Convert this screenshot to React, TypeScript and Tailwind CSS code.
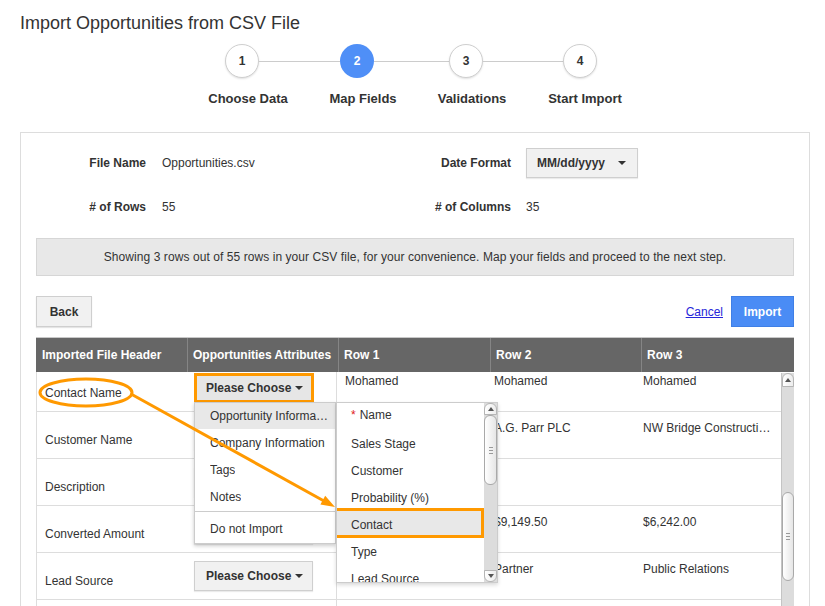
import React from "react";

const STEPS = [
  { n: "1", label: "Choose Data" },
  { n: "2", label: "Map Fields" },
  { n: "3", label: "Validations" },
  { n: "4", label: "Start Import" },
];

const ROWS = [
  { head: "Contact Name", vals: ["Mohamed", "Mohamed", "Mohamed"] },
  { head: "Customer Name", vals: ["", "A.G. Parr PLC", "NW Bridge Construction Ltd"] },
  { head: "Description", vals: ["", "", ""] },
  { head: "Converted Amount", vals: ["", "$9,149.50", "$6,242.00"] },
  { head: "Lead Source", vals: ["", "Partner", "Public Relations"] },
];

const MENU = ["Opportunity Information", "Company Information", "Tags", "Notes"];
const FIELDS = ["Name", "Sales Stage", "Customer", "Probability (%)", "Contact", "Type", "Lead Source"];

function Caret() {
  return <span className="inline-block h-0 w-0 border-x-4 border-t-4 border-x-transparent border-t-[#333]" />;
}

function ArrowUp() {
  return <span className="inline-block h-0 w-0 border-x-[3px] border-b-[4px] border-x-transparent border-b-[#555]" />;
}

function ArrowDown() {
  return <span className="inline-block h-0 w-0 border-x-[3px] border-t-[4px] border-x-transparent border-t-[#555]" />;
}

function Grip() {
  return (
    <div className="flex flex-col gap-[2px]">
      <span className="h-px w-[4px] bg-[#999]" />
      <span className="h-px w-[4px] bg-[#999]" />
      <span className="h-px w-[4px] bg-[#999]" />
    </div>
  );
}

function ChooseButton({ active }: { active?: boolean }) {
  return (
    <div
      className={
        active
          ? "flex h-[30px] w-[120px] items-center gap-1 border-[3px] border-[#ff9900] bg-[#e6e6e6] pl-[9px] font-bold"
          : "flex h-[30px] w-[119px] items-center gap-1 border border-[#cfcfcf] bg-[#f1f1f1] pl-[11px] font-bold shadow-[0_1px_1px_rgba(0,0,0,0.08)]"
      }
    >
      Please Choose <Caret />
    </div>
  );
}

export default function App() {
  return (
    <div className="relative h-[606px] w-[825px] overflow-hidden bg-white font-['Liberation_Sans',Arial,sans-serif] text-[12px] leading-4 text-[#333]">
      {/* Title */}
      <h1 className="px-5 pt-[13px] text-[18px] leading-5 font-normal text-[#333]">Import Opportunities from CSV File</h1>

      {/* Stepper */}
      <div className="mt-[11px] ml-[225px] flex items-center">
        {STEPS.map((s, i) => (
          <React.Fragment key={s.n}>
            <div
              className={
                s.n === "2"
                  ? "flex h-[34px] w-[34px] items-center justify-center rounded-full bg-[#4f8ff7] font-bold text-white"
                  : "flex h-[34px] w-[34px] items-center justify-center rounded-full border border-[#cfcfcf] bg-white font-bold shadow-[0_1px_2px_rgba(0,0,0,0.12)]"
              }
            >
              {s.n}
            </div>
            {i === 0 && <div className="h-px w-[81px] bg-[#ccc]" />}
            {i === 1 && <div className="h-px w-[75px] bg-[#ccc]" />}
            {i === 2 && <div className="h-px w-[80px] bg-[#ccc]" />}
          </React.Fragment>
        ))}
      </div>
      <div className="mt-[13px] ml-[198px] flex text-[13px] font-bold">
        <div className="w-[100px] text-center">{STEPS[0].label}</div>
        <div className="ml-[15px] w-[100px] text-center">{STEPS[1].label}</div>
        <div className="ml-[9px] w-[100px] text-center">{STEPS[2].label}</div>
        <div className="ml-[13px] w-[100px] text-center">{STEPS[3].label}</div>
      </div>

      {/* Panel */}
      <div className="mt-[25px] ml-5 h-[480px] w-[790px] border border-b-0 border-[#ddd] pt-[15px]">
        <div className="flex h-[30px] items-center">
          <div className="w-[125px] text-right font-bold">File Name</div>
          <div className="ml-4 w-[249px]">Opportunities.csv</div>
          <div className="w-[100px] text-right font-bold">Date Format</div>
          <div className="ml-[15px] flex h-[30px] w-[112px] items-center justify-between border border-[#cfcfcf] bg-[#f1f1f1] pr-[11px] pl-[10px] font-bold shadow-[0_1px_1px_rgba(0,0,0,0.08)]">
            MM/dd/yyyy <Caret />
          </div>
        </div>
        <div className="mt-[21px] flex h-4 items-center">
          <div className="w-[125px] text-right font-bold"># of Rows</div>
          <div className="ml-4 w-[249px]">55</div>
          <div className="w-[100px] text-right font-bold"># of Columns</div>
          <div className="ml-[15px]">35</div>
        </div>

        <div className="mx-[15px] mt-[23px] flex h-[38px] items-center justify-center border border-[#d6d6d6] bg-[#e8e8e8] tracking-[0.07px]">
          Showing 3 rows out of 55 rows in your CSV file, for your convenience. Map your fields and proceed to the next step.
        </div>

        <div className="mx-[15px] mt-[20px] flex items-center justify-between">
          <div className="flex h-[31px] w-[56px] items-center justify-center border border-[#cfcfcf] bg-[#f1f1f1] font-bold shadow-[0_1px_1px_rgba(0,0,0,0.1)]">
            Back
          </div>
          <div className="flex items-center gap-2">
            <span className="text-[#2626d9] underline">Cancel</span>
            <div className="flex h-[31px] w-[63px] items-center justify-center border border-[#3f7fe6] bg-[#4a8cf5] font-bold text-white">
              Import
            </div>
          </div>
        </div>

        {/* Table */}
        <div className="relative mx-[15px] mt-[10px]">
          <div className="flex h-[35px] border-t border-[#c8c8c8] bg-[#666] font-bold text-white">
            <div className="flex w-[151px] items-center pl-[6px]">Imported File Header</div>
            <div className="flex w-[151px] items-center border-l border-[#858585] pl-[5px]">Opportunities Attributes</div>
            <div className="flex w-[152px] items-center border-l border-[#858585] pl-[5px]">Row 1</div>
            <div className="flex w-[151px] items-center border-l border-[#858585] pl-[5px]">Row 2</div>
            <div className="flex flex-1 items-center border-l border-[#858585] pl-[5px]">Row 3</div>
          </div>

          <div className="flex h-[234px] overflow-hidden border-l border-[#ddd]">
            <div className="min-w-0 flex-1">
              <div className="-mt-[7px]">
                {ROWS.map((r, i) => (
                  <div key={r.head} className="flex h-[47px] border-b border-[#ddd]">
                    <div className="w-[151px] shrink-0 pt-[20px] pl-[8px]">{r.head}</div>
                    <div className="w-[149px] shrink-0 border-r border-[#ddd] pt-[8px] pl-[6px]">
                      <ChooseButton active={i === 0} />
                    </div>
                    <div className="w-[149px] shrink-0 truncate pt-[8px] pr-[6px] pl-[8px]">{r.vals[0]}</div>
                    <div className="w-[149px] shrink-0 truncate pt-[8px] pr-[6px] pl-[8px]">{r.vals[1]}</div>
                    <div className="min-w-0 flex-1 truncate pt-[8px] pr-[6px] pl-[8px]">{r.vals[2]}</div>
                  </div>
                ))}
                <div className="flex h-[47px]">
                  <div className="w-[300px] shrink-0 border-r border-[#ddd]" />
                </div>
              </div>
            </div>
            <div className="mt-px flex w-[13px] shrink-0 flex-col border-l border-[#c4c4c4] bg-[#dcdcdc]">
              <div className="flex h-[14px] items-center justify-center rounded-t-[6px] border border-[#b5b5b5] bg-linear-to-r from-white to-[#ececec]">
                <ArrowUp />
              </div>
              <div className="mt-[105px] flex h-[89px] items-center justify-center rounded-[6px] border border-[#a9a9a9] bg-linear-to-r from-white to-[#e6e6e6]">
                <Grip />
              </div>
            </div>
          </div>

          {/* Attribute menu */}
          <div className="absolute top-[65px] left-[158px] h-[142px] w-[142px] border border-[#ccc] bg-white shadow-[0_2px_4px_rgba(0,0,0,0.2)]">
            {MENU.map((m, i) => (
              <div
                key={m}
                className={
                  i === 0
                    ? "flex h-[26px] items-center bg-[#e8e8e8] pr-[6px] pl-[15px]"
                    : "flex h-[27px] items-center pr-[6px] pl-[15px]"
                }
              >
                <span className="truncate">{m}</span>
              </div>
            ))}
            <div className="mt-[1px] border-t border-[#ccc]" />
            <div className="mt-[3px] flex h-[27px] items-center pl-[15px]">Do not Import</div>
          </div>

          {/* Field submenu */}
          <div className="absolute top-[65px] left-[300px] flex h-[181px] w-[162px] border border-[#ccc] bg-white shadow-[0_2px_4px_rgba(0,0,0,0.15)]">
            <div className="flex-1 overflow-hidden">
              {FIELDS.map((f) => (
                <div
                  key={f}
                  className={
                    f === "Contact"
                      ? "relative flex h-[27px] items-center bg-[#e8e8e8] pl-[14px]"
                      : f === "Name"
                        ? "flex h-[27px] items-center pb-[3px] pl-[14px]"
                        : "flex h-[27px] items-center pl-[14px]"
                  }
                >
                  {f === "Name" && <span className="mr-1 text-[#e02020]">*</span>}
                  {f}
                  {f === "Contact" && (
                    <span className="absolute -top-[3px] right-0 bottom-0 -left-[3px] border-[3px] border-[#ff9900]" />
                  )}
                </div>
              ))}
            </div>
            <div className="flex w-[13px] flex-col bg-[#dcdcdc]">
              <div className="flex h-[12px] items-center justify-center rounded-t-[6px] border border-[#b5b5b5] bg-linear-to-r from-white to-[#ececec]">
                <ArrowUp />
              </div>
              <div className="flex h-[70px] items-center justify-center rounded-[6px] border border-[#a9a9a9] bg-linear-to-r from-white to-[#e6e6e6]">
                <Grip />
              </div>
              <div className="flex-1" />
              <div className="flex h-[12px] items-center justify-center rounded-b-[6px] border border-[#b5b5b5] bg-linear-to-r from-white to-[#ececec]">
                <ArrowDown />
              </div>
            </div>
          </div>
        </div>
      </div>

      {/* Annotation */}
      <svg className="pointer-events-none absolute top-0 left-0" width={825} height={606}>
        <ellipse cx={86} cy={392.5} rx={46} ry={13.5} fill="none" stroke="#ff9900" strokeWidth={3} />
        <line x1={131} y1={394} x2={324} y2={501} stroke="#ff9900" strokeWidth={3} />
        <polygon points="335,507 320.4,504.6 325.2,495.8" fill="#ff9900" />
      </svg>
    </div>
  );
}
